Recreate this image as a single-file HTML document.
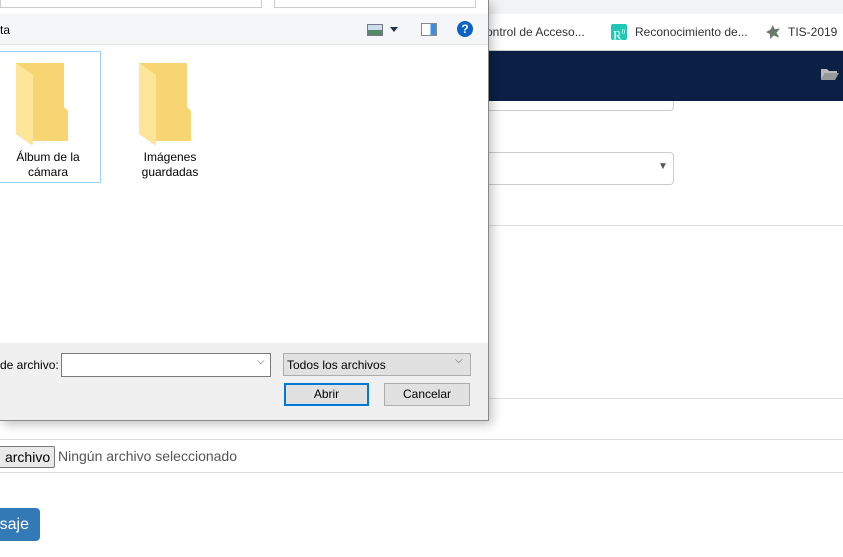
<!DOCTYPE html>
<html><head><meta charset="utf-8"><style>
body{margin:0;width:843px;height:557px;position:relative;overflow:hidden;background:#fff;font-family:"Liberation Sans",sans-serif;}
.a{position:absolute;}
.seg{font-family:"Liberation Sans",sans-serif;font-size:12px;color:#000;}
</style></head><body>
<!-- browser -->
<div class="a" style="left:470px;top:80px;width:202px;height:29px;border:1px solid #ccc;border-radius:4px"></div>
<div class="a" style="left:0;top:0;width:843px;height:14px;background:#f1f3f4"></div>
<div class="a" style="left:0;top:14px;width:843px;height:36px;background:#fff;border-bottom:1px solid #ccc"></div>
<div class="a seg" style="left:486px;top:25px;color:#333">ontrol de Acceso...</div>
<div class="a" style="left:611px;top:24px;width:16px;height:16px;background:#1ec8b4;border-radius:2px;color:#fff;font-family:'Liberation Serif',serif;font-size:13px;line-height:16px;text-indent:2px">R<sup style="font-size:7px">0</sup></div>
<div class="a seg" style="left:635px;top:25px;color:#333">Reconocimiento de...</div>
<div class="a" style="left:766px;top:25px;width:14px;height:14px;background:#6a7a6a;clip-path:polygon(50% 0,62% 30%,100% 25%,75% 55%,95% 90%,55% 75%,30% 100%,28% 65%,0 50%,30% 35%)"></div>
<div class="a seg" style="left:788px;top:25px;color:#333">TIS-2019</div>
<div class="a" style="left:0;top:51px;width:843px;height:50px;background:#0c1f45"></div>
<svg class="a" style="left:820px;top:67px" width="20" height="14"><path d="M1 2h6l2 2h8v2H5L1 13z" fill="#bbb"/><path d="M5 6h14l-4 7H1z" fill="#999"/></svg>
<div class="a" style="left:470px;top:152px;width:202px;height:31px;border:1px solid #ccc;border-radius:4px"></div>
<div class="a" style="left:658px;top:161px;font-size:10px;color:#555">▼</div>
<div class="a" style="left:0;top:225px;width:843px;height:1px;background:#ddd"></div>
<div class="a" style="left:0;top:398px;width:843px;height:1px;background:#ddd"></div>
<div class="a" style="left:0;top:439px;width:843px;height:1px;background:#ddd"></div>
<div class="a" style="left:0;top:472px;width:843px;height:1px;background:#ddd"></div>
<div class="a" style="left:-10px;top:446px;width:63px;height:20px;background:#e9e9e9;border:1px solid #777;border-radius:2px;font-size:14px;line-height:20px;text-align:right">archivo&nbsp;</div>
<div class="a" style="left:58px;top:448px;font-size:14px;color:#555">Ningún archivo seleccionado</div>
<div class="a" style="left:-10px;top:508px;width:50px;height:33px;background:#337ab7;border-radius:4px;color:#fff;font-size:16px;line-height:33px;text-align:right"><span style="margin-right:11px">saje</span></div>
<!-- dialog -->
<div class="a" style="left:0;top:0;width:488px;height:420px;background:#fff;border-right:1px solid #888;border-bottom:1px solid #888;box-shadow:3px 3px 10px rgba(0,0,0,.25)"></div>
<div class="a" style="left:0;top:-4px;width:260px;height:10px;border:1px solid #ccc"></div>
<div class="a" style="left:274px;top:-4px;width:200px;height:10px;border:1px solid #ccc"></div>
<div class="a" style="left:0;top:14px;width:488px;height:30px;background:#f5f6f7;border-bottom:1px solid #e5e5e5"></div>
<div class="a seg" style="left:0;top:23px">ta</div>
<div class="a" style="left:367px;top:24px;width:14px;height:10px;border:1px solid #778;background:linear-gradient(#cde 50%,#586 50%)"></div>
<div class="a" style="left:390px;top:27px;width:0;height:0;border:4px solid transparent;border-top:5px solid #234"></div>
<div class="a" style="left:421px;top:23px;width:14px;height:11px;border:1px solid #888;background:linear-gradient(90deg,#fff 60%,#3b8fe0 60%)"></div>
<div class="a" style="left:457px;top:21px;width:16px;height:16px;border-radius:50%;background:#0b63c4;color:#fff;font-weight:bold;font-size:12px;line-height:16px;text-align:center">?</div>
<div class="a" style="left:-2px;top:51px;width:101px;height:130px;border:1px solid #99d1ff"></div>
<svg class="a" style="left:15px;top:62px" width="60" height="84"><path d="M1 1h48v44l4 4v30H17v4L1 72z" fill="#f6d572"/><path d="M1 1l17 12v70L1 72z" fill="#fde59a"/></svg>
<svg class="a" style="left:138px;top:62px" width="60" height="84"><path d="M1 1h48v44l4 4v30H17v4L1 72z" fill="#f6d572"/><path d="M1 1l17 12v70L1 72z" fill="#fde59a"/></svg>
<div class="a seg" style="left:0;top:150px;width:96px;text-align:center;line-height:15px">Álbum de la<br>cámara</div>
<div class="a seg" style="left:120px;top:150px;width:100px;text-align:center;line-height:15px">Imágenes<br>guardadas</div>
<div class="a" style="left:0;top:343px;width:488px;height:77px;background:#f0f0f0"></div>
<div class="a seg" style="left:0;top:358px">de archivo:</div>
<div class="a" style="left:61px;top:353px;width:208px;height:22px;background:#fff;border:1px solid #7a7a7a"></div>
<div class="a" style="left:257px;top:356px;font-size:10px;color:#555">⌵</div>
<div class="a" style="left:283px;top:353px;width:186px;height:21px;background:#e1e1e1;border:1px solid #adadad"></div>
<div class="a seg" style="left:287px;top:358px">Todos los archivos</div>
<div class="a" style="left:455px;top:355px;font-size:10px;color:#555">⌵</div>
<div class="a seg" style="left:284px;top:383px;width:83px;height:21px;background:#e1e1e1;border:1px solid #0078d7;box-shadow:inset 0 0 0 1px #0078d7;text-align:center;line-height:21px">Abrir</div>
<div class="a seg" style="left:384px;top:383px;width:84px;height:21px;background:#e1e1e1;border:1px solid #adadad;text-align:center;line-height:21px">Cancelar</div>
</body></html>
